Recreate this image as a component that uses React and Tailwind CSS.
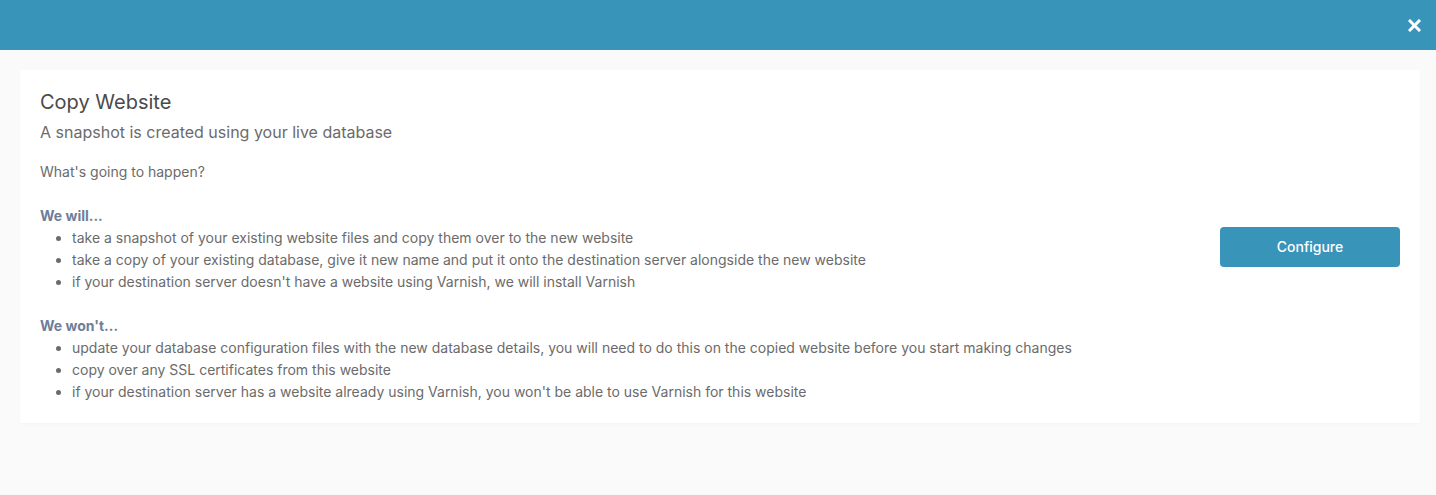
export default function App() {
  const will = [
    "take a snapshot of your existing website files and copy them over to the new website",
    "take a copy of your existing database, give it new name and put it onto the destination server alongside the new website",
    "if your destination server doesn't have a website using Varnish, we will install Varnish",
  ];
  const wont = [
    "update your database configuration files with the new database details, you will need to do this on the copied website before you start making changes",
    "copy over any SSL certificates from this website",
    "if your destination server has a website already using Varnish, you won't be able to use Varnish for this website",
  ];

  return (
    <div className="min-h-[495px] bg-[#fafafa] font-['Inter','Liberation_Sans',sans-serif]">
      {/* header bar */}
      <div className="flex h-[50px] items-center justify-end bg-[#3994ba] pr-[15px]">
        <button className="text-white">
          <svg width="13" height="13" viewBox="0 0 13 13">
            <path d="M2 2 L11 11 M11 2 L2 11" stroke="white" strokeWidth="3" strokeLinecap="square" />
          </svg>
        </button>
      </div>

      {/* card */}
      <div className="pl-5 pr-4 pt-5">
        <div className="flex items-center bg-white p-5 shadow-[0_1px_2px_rgba(0,0,0,0.03)]">
          <div className="flex-1">
            <h1 className="text-[20px] leading-6 text-[#4a4a4a]">Copy Website</h1>
            <p className="mt-[6px] text-[16px] leading-6 text-[#6b6b6b]">
              A snapshot is created using your live database
            </p>
            <p className="mt-[17px] text-[14px] leading-[22px] text-[#6b6b6b]">
              What's going to happen?
            </p>

            <h3 className="mt-[22px] text-[14px] font-bold leading-[22px] text-[#6e7d98]">We will...</h3>
            <ul className="list-disc pl-8 text-[14px] leading-[22px] text-[#6b6b6b]">
              {will.map((w, i) => (
                <li key={i}>{w}</li>
              ))}
            </ul>

            <h3 className="mt-[22px] text-[14px] font-bold leading-[22px] text-[#6e7d98]">We won't...</h3>
            <ul className="list-disc pl-8 text-[14px] leading-[22px] text-[#6b6b6b]">
              {wont.map((w, i) => (
                <li key={i}>{w}</li>
              ))}
            </ul>
          </div>

          <button className="h-10 w-[180px] rounded bg-[#3994ba] text-[14px] font-medium text-white">
            Configure
          </button>
        </div>
      </div>
    </div>
  );
}
